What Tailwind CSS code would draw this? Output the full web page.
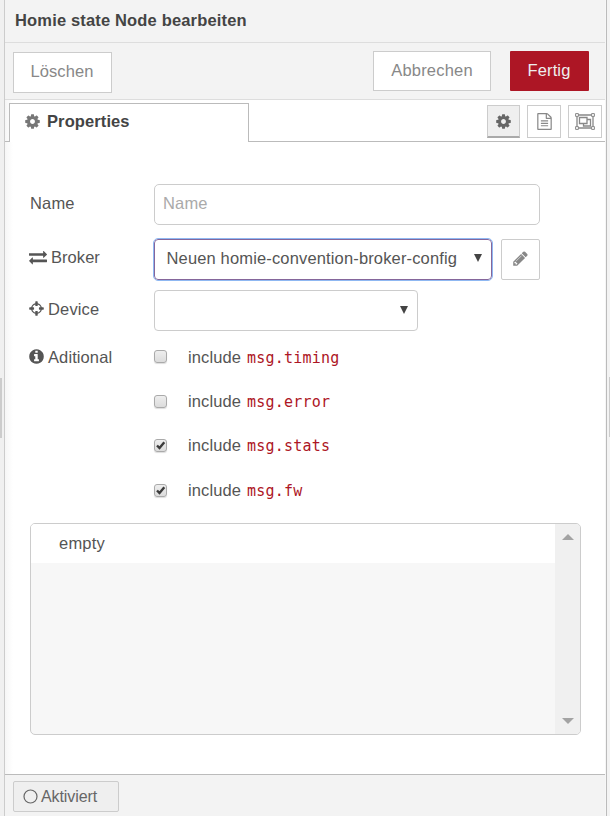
<!DOCTYPE html>
<html lang="de">
<head>
<meta charset="utf-8">
<title>Homie state Node bearbeiten</title>
<script src="https://cdn.jsdelivr.net/npm/@tailwindcss/browser@4"></script>
</head>
<body class="h-[816px] w-[610px] overflow-hidden bg-[#f3f3f3] font-['Liberation_Sans',Arial,sans-serif] text-[16.5px] leading-5 tracking-[0.05px] text-[#555]">
<svg class="hidden">
  <symbol id="cog" viewBox="0 0 1792 1792"><path d="M1152 896q0-106-75-181t-181-75-181 75-75 181 75 181 181 75 181-75 75-181zm512-109v222q0 12-8 23t-20 13l-185 28q-19 54-39 91 35 50 107 138 10 12 10 25t-9 23q-27 37-99 108t-94 71q-12 0-26-9l-138-108q-44 23-91 38-16 136-29 186-7 28-36 28h-222q-14 0-24.5-8.5t-11.5-21.5l-28-184q-49-16-90-37l-141 107q-10 9-25 9-14 0-25-11-126-114-165-168-7-10-7-23 0-12 8-23 15-21 51-66.5t54-70.5q-27-50-41-99l-183-27q-13-2-21-12.5t-8-23.5v-222q0-12 8-23t19-13l186-28q14-46 39-92-40-57-107-138-10-12-10-24 0-10 9-23 26-36 98.5-107.5t94.5-71.5q13 0 26 10l138 107q44-23 91-38 16-136 29-186 7-28 36-28h222q14 0 24.5 8.5t11.5 21.5l28 184q49 16 90 37l142-107q9-9 24-9 13 0 25 10 129 119 165 170 7 8 7 22 0 12-8 23-15 21-51 66.5t-54 70.5q26 50 41 98l183 28q13 2 21 12.5t8 23.5z"/></symbol>
</svg>
<div class="flex h-full">
  <div class="flex w-[5px] shrink-0 flex-col border-r border-[#ccc] bg-[#f0f0f0] pt-[378px]">
    <div class="h-[60px] w-[2px] bg-[#ccc]"></div>
  </div>
  <main class="flex w-[600px] shrink-0 flex-col bg-white bg-linear-to-r from-[#f6f6f6] to-white to-[8px]">
    <header class="flex h-[43px] shrink-0 items-center border-b border-[#ddd] bg-[#f3f3f3] pb-[3px] pl-[10px] text-[16.5px] font-bold tracking-[0.16px] text-[#444]"><span>Homie state Node bearbeiten</span></header>
    <div class="flex h-[57px] shrink-0 items-start border-b border-[#ddd] bg-[#f3f3f3] pt-[8px] pr-[16px] pl-[8px] text-[#888]">
      <button class="mt-[1px] h-[41px] w-[99px] border border-[#ccc] bg-white pr-[1px] pb-[4px] tracking-[0.12px]">Löschen</button>
      <button class="ml-auto h-[40px] w-[118px] border border-[#ccc] bg-white pb-[2px] tracking-[0.2px]">Abbrechen</button>
      <button class="ml-[19px] h-[40px] w-[79px] rounded-[1px] bg-[#ad1625] pr-[1px] pb-[2px] tracking-[0.12px] text-[#eee]">Fertig</button>
    </div>
    <nav class="flex h-[42px] shrink-0 items-stretch">
      <div class="w-[4px] border-b border-[#bbb]"></div>
      <div class="mt-[3px] flex w-[240px] items-center gap-[6px] border-x border-t border-[#bbb] bg-white pb-[3px] pl-[14px] text-[16.5px] font-bold tracking-[0.1px] text-[#444]">
        <svg class="size-[17px] fill-[#777]"><use href="#cog"/></svg><span class="pb-[2px]">Properties</span>
      </div>
      <div class="flex grow items-start justify-end gap-[7px] border-b border-[#bbb] pt-[5px] pr-[3px]">
        <div class="flex h-[33px] w-[33px] items-center justify-center border border-b-2 border-[#ccc] border-b-[#aaa] bg-[#efefef]"><svg class="size-[17px] fill-[#666]"><use href="#cog"/></svg></div>
        <div class="flex h-[33px] w-[34px] items-center justify-center border border-[#ccc] bg-white"><svg class="size-[17px] fill-[#888]" viewBox="0 0 1792 1792"><path d="M1596 380q28 28 48 76t20 88v1152q0 40-28 68t-68 28h-1344q-40 0-68-28t-28-68v-1600q0-40 28-68t68-28h896q40 0 88 20t76 48zm-444-244v376h376q-10-29-22-41l-313-313q-12-12-41-22zm384 1528v-1024h-416q-40 0-68-28t-28-68v-416h-768v1536h1280zm-1024-864q0-14 9-23t23-9h704q14 0 23 9t9 23v64q0 14-9 23t-23 9h-704q-14 0-23-9t-9-23v-64zm736 224q14 0 23 9t9 23v64q0 14-9 23t-23 9h-704q-14 0-23-9t-9-23v-64q0-14 9-23t23-9h704zm0 256q14 0 23 9t9 23v64q0 14-9 23t-23 9h-704q-14 0-23-9t-9-23v-64q0-14 9-23t23-9h704z"/></svg></div>
        <div class="flex h-[33px] w-[34px] items-center justify-center border border-[#ccc] bg-white"><svg class="h-[17px] w-[20px] fill-none stroke-[#888]" viewBox="0 0 20 17"><path stroke-width="1.3" d="M3 2h14M3 15h14M2 3v11M18 3v11"/><path fill="#fff" d="M.6.6h2.8v2.8H.6zM16.6.6h2.8v2.8h-2.8zM.6 13.6h2.8v2.8H.6zM16.6 13.6h2.8v2.8h-2.8z"/><path stroke-width="1.3" d="M4.500 4.500h7.500v6h-7.500zM12 6.500h3.500v6.500h-7v-2.500"/></svg></div>
      </div>
    </nav>
    <section class="flex grow flex-col pt-[42px] pl-[25px]">
      <div class="flex h-[41px]">
        <label class="w-[124px] pt-[9px] tracking-[0.15px]">Name</label>
        <div class="w-[386px] rounded-[5px] border border-[#ccc] bg-white pt-[8px] pl-[8px] tracking-[0.15px] text-[#aaa]">Name</div>
      </div>
      <div class="mt-[14px] flex h-[41px]">
        <label class="flex w-[124px] items-start gap-[4px] pt-[8px]"><svg class="-ml-[1px] mt-[1px] h-[18px] w-[18px] fill-[#555]" viewBox="0 0 1792 1792"><path d="M1792 1184v192q0 13-9.5 22.5t-22.5 9.5h-1376v192q0 13-9.5 22.5t-22.5 9.5q-12 0-24-10l-319-320q-9-9-9-22 0-14 9-23l320-320q9-9 23-9 13 0 22.5 9.5t9.5 22.5v192h1376q13 0 22.5 9.5t9.5 22.5zm0-544q0 14-9 23l-320 320q-9 9-23 9-13 0-22.5-9.5t-9.5-22.5v-192h-1376q-13 0-22.5-9.5t-9.5-22.5v-192q0-13 9.5-22.5t22.5-9.5h1376v-192q0-14 9-23t23-9q12 0 24 10l319 319q9 9 9 23z"/></svg><span>Broker</span></label>
        <div class="flex w-[338px] items-center justify-between rounded-[4px] border border-[#85669b] bg-white pr-[9px] pb-[3px] pl-[12px] outline-1 outline-[#8fb8f2]"><span class="-ml-[0.5px] whitespace-nowrap tracking-[0.15px]">Neuen homie-convention-broker-config</span><svg class="h-[8px] w-[8px] fill-[#444]" viewBox="0 0 8 8"><path d="M0 0h8L4 8z"/></svg></div>
        <div class="ml-[9px] flex w-[39px] items-center justify-center rounded-[2px] border border-[#ccc] bg-white pb-[2px]"><svg class="size-[17px] fill-[#888]" viewBox="0 0 1792 1792"><path d="M491 1536l91-91-235-235-91 91v107h128v128h107zm523-928q0-22-22-22-10 0-17 7l-542 542q-7 7-7 17 0 22 22 22 10 0 17-7l542-542q7-7 7-17zm-54-192l416 416-832 832h-416v-416zm683 96q0 53-37 90l-166 166-416-416 166-165q36-38 90-38 53 0 91 38l235 234q37 39 37 91z"/></svg></div>
      </div>
      <div class="mt-[10px] flex h-[41px]">
        <label class="flex w-[124px] items-start gap-[3px] pt-[9px]"><svg class="-ml-[2px] mt-[1px] size-[17px] fill-[#555]" viewBox="0 0 1792 1792"><path d="M1325 1024h-109q-26 0-45-19t-19-45v-128q0-26 19-45t45-19h109q-32-108-112.5-188.500t-188.500-112.500v109q0 26-19 45t-45 19h-128q-26 0-45-19t-19-45v-109q-108 32-188.500 112.500t-112.500 188.500h109q26 0 45 19t19 45v128q0 26-19 45t-45 19h-109q32 108 112.500 188.500t188.500 112.500v-109q0-26 19-45t45-19h128q26 0 45 19t19 45v109q108-32 188.500-112.500t112.500-188.500zm339-192v128q0 26-19 45t-45 19h-143q-37 161-154.500 278.500t-278.500 154.500v143q0 26-19 45t-45 19h-128q-26 0-45-19t-19-45v-143q-161-37-278.500-154.500t-154.500-278.500h-143q-26 0-45-19t-19-45v-128q0-26 19-45t45-19h143q37-161 154.500-278.500t278.500-154.500v-143q0-26 19-45t45-19h128q26 0 45 19t19 45v143q161 37 278.500 154.500t154.500 278.500h143q26 0 45 19t19 45z"/></svg><span class="tracking-[0.15px]">Device</span></label>
        <div class="flex w-[264px] items-center justify-end rounded-[4px] border border-[#ccc] bg-white pr-[9px] pb-[2px]"><svg class="h-[8px] w-[8px] fill-[#444]" viewBox="0 0 8 8"><path d="M0 0h8L4 8z"/></svg></div>
      </div>
      <div class="mt-[16px] flex h-[153px]">
        <label class="flex w-[124px] items-start gap-[3px]"><svg class="-ml-[2px] mt-[1px] size-[17px] fill-[#555]" viewBox="0 0 1792 1792"><path d="M1152 1376v-160q0-14-9-23t-23-9h-96v-512q0-14-9-23t-23-9h-320q-14 0-23 9t-9 23v160q0 14 9 23t23 9h96v320h-96q-14 0-23 9t-9 23v160q0 14 9 23t23 9h448q14 0 23-9t9-23zm-128-896v-160q0-14-9-23t-23-9h-192q-14 0-23 9t-9 23v160q0 14 9 23t23 9h192q14 0 23-9t9-23zm640 416q0 209-103 385.500t-279.500 279.500-385.500 103-385.500-103-279.500-279.500-103-385.500 103-385.500 279.500-279.500 385.500-103 385.500 103 279.500 279.500 103 385.500z"/></svg><span class="tracking-[0.1px]">Aditional</span></label>
        <div class="flex flex-col gap-[24.3px]">
          <div class="flex h-5 items-center"><span class="mb-[1px] size-[13px] rounded-[3px] border border-[#aaa] bg-linear-to-b from-[#eee] to-[#dcdcdc] shadow-[0_1px_1px_#ddd]"></span><span class="ml-[21px] w-[59px] tracking-[0.12px]">include</span><code class="pt-[2px] font-['DejaVu_Sans_Mono',monospace] text-[15px] tracking-[0.22px] text-[#ad1625]">msg.timing</code></div>
          <div class="flex h-5 items-center"><span class="size-[13px] rounded-[3px] border border-[#aaa] bg-linear-to-b from-[#eee] to-[#dcdcdc] shadow-[0_1px_1px_#ddd]"></span><span class="ml-[21px] w-[59px] tracking-[0.12px]">include</span><code class="pt-[2px] font-['DejaVu_Sans_Mono',monospace] text-[15px] tracking-[0.22px] text-[#ad1625]">msg.error</code></div>
          <div class="flex h-5 items-center"><span class="size-[13px] rounded-[3px] border border-[#aaa] bg-linear-to-b from-[#eee] to-[#dcdcdc] shadow-[0_1px_1px_#ddd]"><svg class="size-[11px] fill-none stroke-[#3c3c3c] stroke-[2.4]" viewBox="0 0 11 11"><path d="M2 5.500 4.500 8 9.300 2.200"/></svg></span><span class="ml-[21px] w-[59px] pb-[1px] tracking-[0.12px]">include</span><code class="pt-[1px] font-['DejaVu_Sans_Mono',monospace] text-[15px] tracking-[0.22px] text-[#ad1625]">msg.stats</code></div>
          <div class="flex h-5 items-center"><span class="mt-[1px] size-[13px] rounded-[3px] border border-[#aaa] bg-linear-to-b from-[#eee] to-[#dcdcdc] shadow-[0_1px_1px_#ddd]"><svg class="size-[11px] fill-none stroke-[#3c3c3c] stroke-[2.4]" viewBox="0 0 11 11"><path d="M2 5.500 4.500 8 9.300 2.200"/></svg></span><span class="ml-[21px] w-[59px] tracking-[0.12px]">include</span><code class="pt-[2px] font-['DejaVu_Sans_Mono',monospace] text-[15px] tracking-[0.22px] text-[#ad1625]">msg.fw</code></div>
        </div>
      </div>
      <div class="mt-[23px] flex h-[212px] w-[551px] overflow-hidden rounded-[5px] border border-[#ccc] bg-[#f7f7f7]">
        <div class="grow"><div class="h-[39px] bg-white pt-[9px] pl-[28px] tracking-[0.2px]">empty</div></div>
        <div class="flex w-[25px] flex-col items-center justify-between bg-[#f0f0f0] py-[10px]">
          <svg class="h-[6px] w-[12px] fill-[#a3a3a3]" viewBox="0 0 12 6"><path d="M6 0l6 6H0z"/></svg>
          <svg class="h-[6px] w-[12px] fill-[#a3a3a3]" viewBox="0 0 12 6"><path d="M0 0h12L6 6z"/></svg>
        </div>
      </div>
    </section>
    <footer class="h-[42px] shrink-0 border-t border-[#bbb] bg-[#f3f3f3] pt-[6px] pl-[8px]">
      <div class="flex h-[31px] w-[106px] items-center gap-[3px] rounded-[2px] border border-[#ccc] bg-[#efefef] pl-[9px] text-[16px] tracking-[-0.1px] text-[#666]"><svg class="size-[15px] fill-none stroke-[#666] stroke-[1.2]" viewBox="0 0 15 15"><circle cx="7.500" cy="7.500" r="6.500"/></svg><span class="pt-[1px]">Aktiviert</span></div>
    </footer>
  </main>
  <div class="w-[1px] shrink-0 bg-[#f6f6f6]"></div>
  <div class="flex grow flex-col items-end border-l border-[#bbb] bg-[#f3f3f3] pt-[377px]"><div class="h-[60px] w-[1px] bg-[#ccc]"></div></div>
</div>
</body>
</html>
